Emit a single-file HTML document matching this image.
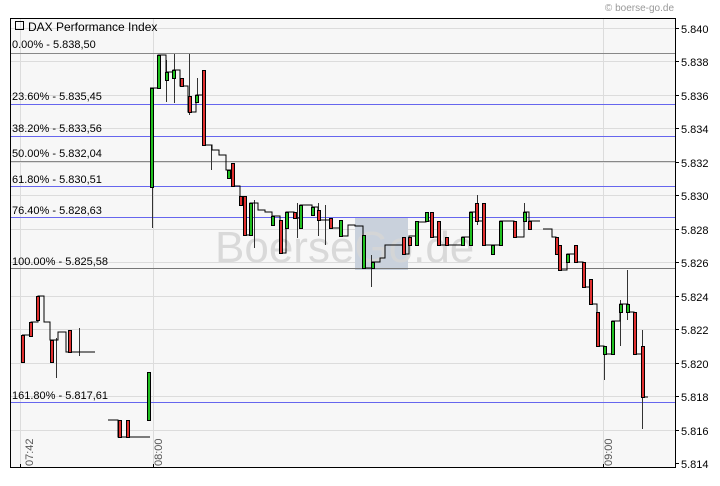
<!DOCTYPE html>
<html><head><meta charset="utf-8"><style>
body{margin:0;background:#fff;width:720px;height:481px;overflow:hidden;font-family:"Liberation Sans",sans-serif}
svg text{font-family:"Liberation Sans",sans-serif}
</style></head><body>
<svg width="720" height="481" xmlns="http://www.w3.org/2000/svg">
<text x="674" y="11" font-size="10" fill="#999" text-anchor="end">© boerse-go.de</text>
<rect x="10.5" y="18.5" width="665" height="449" fill="#f7f7f7" stroke="#000"/>
<g stroke="#dcdcdc" stroke-width="1">
<line x1="11" x2="675" y1="28.5" y2="28.5"/><line x1="11" x2="675" y1="61.5" y2="61.5"/><line x1="11" x2="675" y1="95.5" y2="95.5"/><line x1="11" x2="675" y1="128.5" y2="128.5"/><line x1="11" x2="675" y1="162.5" y2="162.5"/><line x1="11" x2="675" y1="195.5" y2="195.5"/><line x1="11" x2="675" y1="229.5" y2="229.5"/><line x1="11" x2="675" y1="262.5" y2="262.5"/><line x1="11" x2="675" y1="296.5" y2="296.5"/><line x1="11" x2="675" y1="329.5" y2="329.5"/><line x1="11" x2="675" y1="363.5" y2="363.5"/><line x1="11" x2="675" y1="396.5" y2="396.5"/><line x1="11" x2="675" y1="430.5" y2="430.5"/>
<line x1="20.5" x2="20.5" y1="19" y2="467"/><line x1="153.5" x2="153.5" y1="19" y2="467"/><line x1="603.5" x2="603.5" y1="19" y2="467"/>
</g>
<rect x="355" y="218" width="53" height="52" fill="#c9d1dc"/>
<text x="215" y="262" font-size="44" fill="#d6d6d6" opacity="0.9">BoerseGo.de</text>
<g stroke-width="1">
<line x1="11" x2="675" y1="53.5" y2="53.5" stroke="#888"/>
<line x1="11" x2="675" y1="104.5" y2="104.5" stroke="#6666ee"/>
<line x1="11" x2="675" y1="136.5" y2="136.5" stroke="#6666ee"/>
<line x1="11" x2="675" y1="161.5" y2="161.5" stroke="#888"/>
<line x1="11" x2="675" y1="186.5" y2="186.5" stroke="#6666ee"/>
<line x1="11" x2="675" y1="217.5" y2="217.5" stroke="#6666ee"/>
<line x1="11" x2="675" y1="268.5" y2="268.5" stroke="#777"/>
<line x1="11" x2="675" y1="402.5" y2="402.5" stroke="#6666ee"/>
</g>
<g font-size="11" fill="#000">
<text x="12" y="48">0.00% - 5.838,50</text>
<text x="12" y="100">23.60% - 5.835,45</text>
<text x="12" y="132">38.20% - 5.833,56</text>
<text x="12" y="157">50.00% - 5.832,04</text>
<text x="12" y="183">61.80% - 5.830,51</text>
<text x="12" y="214">76.40% - 5.828,63</text>
<text x="12" y="265">100.00% - 5.825,58</text>
<text x="12" y="399">161.80% - 5.817,61</text>
</g>
<rect x="15.5" y="21.5" width="8" height="8" fill="none" stroke="#000"/>
<text x="28" y="31" font-size="12">DAX Performance Index</text>
<g font-size="11" fill="#000">
<text x="681" y="33">5.840</text><text x="681" y="66">5.838</text><text x="681" y="100">5.836</text><text x="681" y="133">5.834</text><text x="681" y="167">5.832</text><text x="681" y="200">5.830</text><text x="681" y="234">5.828</text><text x="681" y="267">5.826</text><text x="681" y="301">5.824</text><text x="681" y="334">5.822</text><text x="681" y="368">5.820</text><text x="681" y="401">5.818</text><text x="681" y="435">5.816</text><text x="681" y="468">5.814</text>
</g>
<g stroke="#000"><line x1="675" x2="679" y1="28.5" y2="28.5"/><line x1="675" x2="679" y1="61.5" y2="61.5"/><line x1="675" x2="679" y1="95.5" y2="95.5"/><line x1="675" x2="679" y1="128.5" y2="128.5"/><line x1="675" x2="679" y1="162.5" y2="162.5"/><line x1="675" x2="679" y1="195.5" y2="195.5"/><line x1="675" x2="679" y1="229.5" y2="229.5"/><line x1="675" x2="679" y1="262.5" y2="262.5"/><line x1="675" x2="679" y1="296.5" y2="296.5"/><line x1="675" x2="679" y1="329.5" y2="329.5"/><line x1="675" x2="679" y1="363.5" y2="363.5"/><line x1="675" x2="679" y1="396.5" y2="396.5"/><line x1="675" x2="679" y1="430.5" y2="430.5"/><line x1="675" x2="679" y1="463.5" y2="463.5"/>
<line x1="20.5" x2="20.5" y1="464" y2="468"/><line x1="153.5" x2="153.5" y1="464" y2="468"/><line x1="603.5" x2="603.5" y1="464" y2="468"/></g>
<g font-size="11" fill="#555">
<text transform="translate(33,466) rotate(-90)">07:42</text>
<text transform="translate(162,466) rotate(-90)">08:00</text>
<text transform="translate(612,466) rotate(-90)">09:00</text>
</g>
<!-- wicks -->
<g stroke="#333" stroke-width="1">
<line x1="152.5" x2="152.5" y1="88" y2="228"/><line x1="166.5" x2="166.5" y1="60" y2="102"/><line x1="174.5" x2="174.5" y1="54" y2="103"/><line x1="189.5" x2="189.5" y1="54" y2="115"/><line x1="197.5" x2="197.5" y1="78" y2="103"/><line x1="211.5" x2="211.5" y1="145" y2="170"/><line x1="254.5" x2="254.5" y1="200" y2="248"/><line x1="297.5" x2="297.5" y1="203" y2="238"/><line x1="318.5" x2="318.5" y1="203" y2="236"/><line x1="325.5" x2="325.5" y1="205" y2="245"/><line x1="371.5" x2="371.5" y1="255" y2="287"/><line x1="477.5" x2="477.5" y1="195" y2="225"/><line x1="524.5" x2="524.5" y1="203" y2="220"/><line x1="604.5" x2="604.5" y1="346" y2="380"/><line x1="620.5" x2="620.5" y1="300" y2="346"/><line x1="627.5" x2="627.5" y1="270" y2="320"/><line x1="642.5" x2="642.5" y1="330" y2="429"/><line x1="56.5" x2="56.5" y1="338" y2="378"/><line x1="79.5" x2="79.5" y1="328" y2="356"/>
</g>
<!-- step line of closes -->
<path fill="none" stroke="#000" stroke-width="1" d="M22 335H31V322H38V296H44V322H50V340H58V332H66V352H95M108 420H118V437H150M148 420V372M150 88H158V55H166V72H173V70H180V86H188V112H196V95H203V145H212V150H219V155H226V170H232V186H240V205H244V235H250V203H258V210H265V212H272V216H280V253H286V212H294V218H300V205H312V207H318V220H330V228H340V236H348V225H355V226H363V268H372V262H380V258H385V245H392V245H403V254H409V236H416V222H426V221H431V237H438V245H446V245H453V245H462V237H470V212H476V221H483V245H492V245H500V221H514V237H524V212H529V221H540M543 229H552V237H556V254H559V270H567V254H575V262H583V287H590V304H597V346H604V354H612V321H620V304H628V312H634V354H642V397H648"/>
<!-- bodies -->
<g stroke="#000" stroke-width="1">
<g fill="#e03030">
<rect x="21.5" y="335.5" width="3" height="27"/><rect x="29.5" y="322.5" width="3" height="14"/><rect x="36.5" y="296.5" width="3" height="24"/><rect x="50.5" y="340.5" width="3" height="22"/><rect x="68.5" y="330.5" width="3" height="22"/><rect x="118.5" y="420.5" width="3" height="17"/><rect x="126.5" y="420.5" width="3" height="17"/>
<rect x="180.5" y="78.5" width="3" height="8"/><rect x="188.5" y="96.5" width="3" height="16"/><rect x="202.5" y="70.5" width="3" height="75"/><rect x="231.5" y="163.5" width="3" height="23"/><rect x="239.5" y="196.5" width="3" height="9"/><rect x="243.5" y="196.5" width="3" height="39"/><rect x="279.5" y="220.5" width="3" height="33"/><rect x="293.5" y="212.5" width="3" height="6"/><rect x="317.5" y="210.5" width="3" height="10"/><rect x="329.5" y="218.5" width="3" height="10"/>
<rect x="402.5" y="237.5" width="3" height="17"/><rect x="408.5" y="237.5" width="3" height="8"/><rect x="430.5" y="212.5" width="3" height="25"/><rect x="437.5" y="221.5" width="3" height="24"/><rect x="445.5" y="237.5" width="3" height="8"/><rect x="475.5" y="203.5" width="3" height="18"/><rect x="482.5" y="203.5" width="3" height="42"/><rect x="513.5" y="221.5" width="3" height="16"/><rect x="528.5" y="221.5" width="3" height="8"/><rect x="555.5" y="237.5" width="3" height="17"/><rect x="558.5" y="245.5" width="3" height="25"/><rect x="574.5" y="245.5" width="3" height="17"/><rect x="582.5" y="262.5" width="3" height="25"/><rect x="589.5" y="279.5" width="3" height="25"/><rect x="596.5" y="312.5" width="3" height="34"/><rect x="633.5" y="312.5" width="3" height="42"/><rect x="641.5" y="346.5" width="3" height="51"/>
</g>
<g fill="#20c020">
<rect x="147.5" y="372.5" width="3" height="48"/><rect x="150.5" y="88.5" width="3" height="99"/><rect x="157.5" y="55.5" width="3" height="33"/><rect x="165.5" y="72.5" width="3" height="8"/><rect x="172.5" y="70.5" width="3" height="8"/><rect x="195.5" y="95.5" width="3" height="7"/><rect x="227.5" y="170.5" width="3" height="8"/><rect x="249.5" y="203.5" width="3" height="32"/><rect x="271.5" y="216.5" width="3" height="9"/><rect x="285.5" y="212.5" width="3" height="16"/><rect x="299.5" y="205.5" width="3" height="23"/><rect x="311.5" y="207.5" width="3" height="8"/><rect x="339.5" y="220.5" width="3" height="16"/><rect x="362.5" y="235.5" width="3" height="33"/><rect x="371.5" y="262.5" width="3" height="6"/>
<rect x="415.5" y="221.5" width="3" height="24"/><rect x="425.5" y="212.5" width="3" height="9"/><rect x="461.5" y="237.5" width="3" height="8"/><rect x="469.5" y="212.5" width="3" height="33"/><rect x="491.5" y="245.5" width="3" height="9"/><rect x="499.5" y="221.5" width="3" height="24"/><rect x="523.5" y="212.5" width="3" height="9"/><rect x="566.5" y="254.5" width="3" height="8"/><rect x="603.5" y="346.5" width="3" height="8"/><rect x="611.5" y="321.5" width="3" height="33"/><rect x="619.5" y="304.5" width="3" height="8"/><rect x="626.5" y="304.5" width="3" height="8"/>
</g>
</g>
</svg>
</body></html>
